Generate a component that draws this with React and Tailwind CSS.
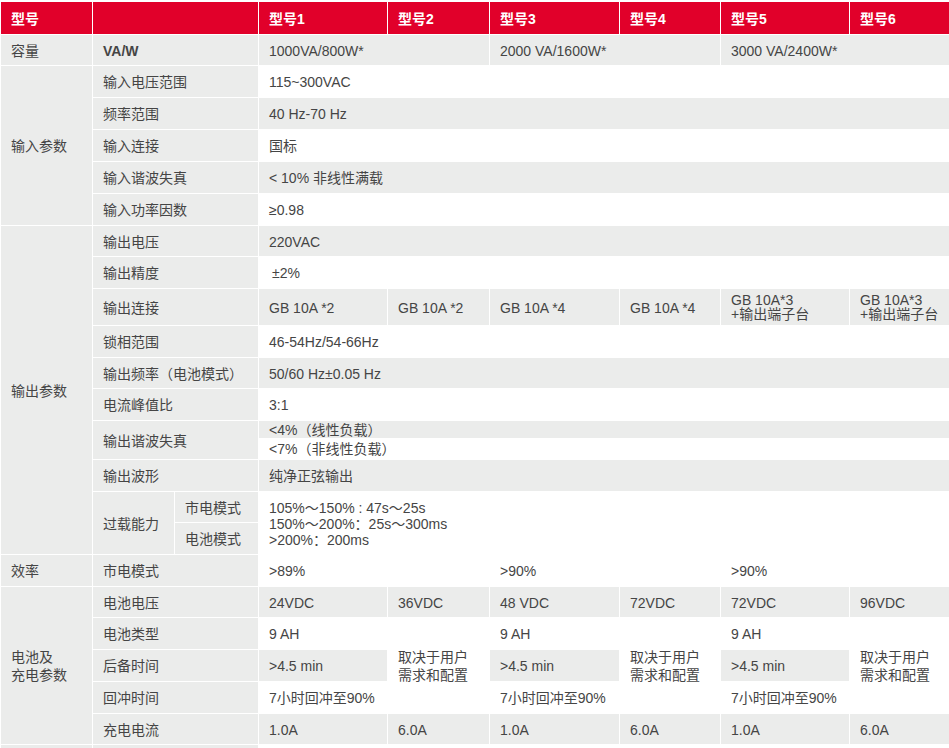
import React from 'react';

const GRAY = 'bg-[#ebeceb]';
const WHITE = 'bg-white';

// basic table cell with white grid lines; pad overrides the vertical padding
const Td = ({ children, className = '', pad = 'pt-[2px] pb-0', ...props }) => (
    <td className={`border border-white px-[10px] ${pad} align-middle ${className}`} {...props}>
        {children}
    </td>
);

const Label = ({ children, className = '', ...props }) => (
    <Td className={`${GRAY} ${className}`} {...props}>{children}</Td>
);

const App = () => {
    return (
        <div className="w-[949px] h-[748px] overflow-hidden bg-white pt-[2px]">
            <table
                className="table-fixed border-collapse w-[949px] text-[14px] leading-[20px] text-[#454545]"
                style={{ fontFamily: '"Liberation Sans", "Noto Sans CJK SC", sans-serif' }}
            >
                <colgroup>
                    <col className="w-[92px]" />
                    <col className="w-[82px]" />
                    <col className="w-[84px]" />
                    <col className="w-[129px]" />
                    <col className="w-[102px]" />
                    <col className="w-[130px]" />
                    <col className="w-[101px]" />
                    <col className="w-[129px]" />
                    <col className="w-[100px]" />
                </colgroup>
                <tbody>
                    {/* header */}
                    <tr className="h-[32px] bg-[#e1002a] text-white font-bold">
                        <Td className="border-t-0">型号</Td>
                        <Td colSpan={2} className="border-t-0"></Td>
                        <Td className="border-t-0">型号1</Td>
                        <Td className="border-t-0">型号2</Td>
                        <Td className="border-t-0">型号3</Td>
                        <Td className="border-t-0">型号4</Td>
                        <Td className="border-t-0">型号5</Td>
                        <Td className="border-t-0">型号6</Td>
                    </tr>

                    {/* capacity */}
                    <tr className="h-[31px]">
                        <Label>容量</Label>
                        <Label colSpan={2} className="font-bold">VA/W</Label>
                        <Td colSpan={2} className={GRAY}>1000VA/800W*</Td>
                        <Td colSpan={2} className={GRAY}>2000 VA/1600W*</Td>
                        <Td colSpan={2} className={GRAY}>3000 VA/2400W*</Td>
                    </tr>

                    {/* input */}
                    <tr className="h-[32px]">
                        <Label rowSpan={5}>输入参数</Label>
                        <Label colSpan={2}>输入电压范围</Label>
                        <Td colSpan={6} className={WHITE}>115~300VAC</Td>
                    </tr>
                    <tr className="h-[32px]">
                        <Label colSpan={2}>频率范围</Label>
                        <Td colSpan={6} className={GRAY}>40 Hz-70 Hz</Td>
                    </tr>
                    <tr className="h-[32px]">
                        <Label colSpan={2}>输入连接</Label>
                        <Td colSpan={6} className={WHITE}>国标</Td>
                    </tr>
                    <tr className="h-[32px]">
                        <Label colSpan={2}>输入谐波失真</Label>
                        <Td colSpan={6} className={GRAY}>&lt; 10% 非线性满载</Td>
                    </tr>
                    <tr className="h-[32px]">
                        <Label colSpan={2}>输入功率因数</Label>
                        <Td colSpan={6} className={WHITE}>≥0.98</Td>
                    </tr>

                    {/* output */}
                    <tr className="h-[31px]">
                        <Label rowSpan={11}>输出参数</Label>
                        <Label colSpan={2}>输出电压</Label>
                        <Td colSpan={6} className={GRAY}>220VAC</Td>
                    </tr>
                    <tr className="h-[32px]">
                        <Label colSpan={2}>输出精度</Label>
                        <Td colSpan={6} className={`${WHITE} pl-[13px]`}>±2%</Td>
                    </tr>
                    <tr className="h-[37px]">
                        <Label colSpan={2}>输出连接</Label>
                        <Td className={GRAY}>GB 10A *2</Td>
                        <Td className={GRAY}>GB 10A *2</Td>
                        <Td className={GRAY}>GB 10A *4</Td>
                        <Td className={GRAY}>GB 10A *4</Td>
                        <Td pad="py-[1px]" className={`${GRAY} leading-[14px]`}>GB 10A*3<br />+输出端子台</Td>
                        <Td pad="py-[1px]" className={`${GRAY} leading-[14px]`}>GB 10A*3<br />+输出端子台</Td>
                    </tr>
                    <tr className="h-[32px]">
                        <Label colSpan={2}>锁相范围</Label>
                        <Td colSpan={6} className={WHITE}>46-54Hz/54-66Hz</Td>
                    </tr>
                    <tr className="h-[31px]">
                        <Label colSpan={2}>输出频率（电池模式）</Label>
                        <Td colSpan={6} className={GRAY}>50/60 Hz±0.05 Hz</Td>
                    </tr>
                    <tr className="h-[32px]">
                        <Label colSpan={2}>电流峰值比</Label>
                        <Td colSpan={6} className={WHITE}>3:1</Td>
                    </tr>
                    <tr className="h-[18px]">
                        <Label colSpan={2} rowSpan={2}>输出谐波失真</Label>
                        <Td colSpan={6} pad="pt-[1px] pb-0" className={`${GRAY} leading-[16px]`}>&lt;4%（线性负载）</Td>
                    </tr>
                    <tr className="h-[21px]">
                        <Td colSpan={6} pad="py-[1px]" className={`${WHITE} leading-[16px]`}>&lt;7%（非线性负载）</Td>
                    </tr>
                    <tr className="h-[32px]">
                        <Label colSpan={2}>输出波形</Label>
                        <Td colSpan={6} className={GRAY}>纯净正弦输出</Td>
                    </tr>
                    <tr className="h-[31px]">
                        <Label rowSpan={2}>过载能力</Label>
                        <Label>市电模式</Label>
                        <Td colSpan={6} rowSpan={2} className={`${WHITE} leading-[16px]`}>
                            105%～150% : 47s～25s<br />
                            150%～200%：25s～300ms<br />
                            &gt;200%：200ms
                        </Td>
                    </tr>
                    <tr className="h-[32px]">
                        <Label>电池模式</Label>
                    </tr>

                    {/* efficiency */}
                    <tr className="h-[32px]">
                        <Label>效率</Label>
                        <Label colSpan={2}>市电模式</Label>
                        <Td colSpan={2} className={WHITE}>&gt;89%</Td>
                        <Td colSpan={2} className={WHITE}>&gt;90%</Td>
                        <Td colSpan={2} className={WHITE}>&gt;90%</Td>
                    </tr>

                    {/* battery */}
                    <tr className="h-[31px]">
                        <Label rowSpan={5} className="leading-[18px]">电池及<br />充电参数</Label>
                        <Label colSpan={2}>电池电压</Label>
                        <Td className={GRAY}>24VDC</Td>
                        <Td className={GRAY}>36VDC</Td>
                        <Td className={GRAY}>48 VDC</Td>
                        <Td className={GRAY}>72VDC</Td>
                        <Td className={GRAY}>72VDC</Td>
                        <Td className={GRAY}>96VDC</Td>
                    </tr>
                    <tr className="h-[32px]">
                        <Label colSpan={2}>电池类型</Label>
                        <Td className={WHITE}>9 AH</Td>
                        <Td rowSpan={3} className={`${WHITE} leading-[18px]`}>取决于用户<br />需求和配置</Td>
                        <Td className={WHITE}>9 AH</Td>
                        <Td rowSpan={3} className={`${WHITE} leading-[18px]`}>取决于用户<br />需求和配置</Td>
                        <Td className={WHITE}>9 AH</Td>
                        <Td rowSpan={3} className={`${WHITE} leading-[18px]`}>取决于用户<br />需求和配置</Td>
                    </tr>
                    <tr className="h-[32px]">
                        <Label colSpan={2}>后备时间</Label>
                        <Td className={GRAY}>&gt;4.5 min</Td>
                        <Td className={GRAY}>&gt;4.5 min</Td>
                        <Td className={GRAY}>&gt;4.5 min</Td>
                    </tr>
                    <tr className="h-[32px]">
                        <Label colSpan={2}>回冲时间</Label>
                        <Td className={WHITE}>7小时回冲至90%</Td>
                        <Td className={WHITE}>7小时回冲至90%</Td>
                        <Td className={WHITE}>7小时回冲至90%</Td>
                    </tr>
                    <tr className="h-[31px]">
                        <Label colSpan={2}>充电电流</Label>
                        <Td className={GRAY}>1.0A</Td>
                        <Td className={GRAY}>6.0A</Td>
                        <Td className={GRAY}>1.0A</Td>
                        <Td className={GRAY}>6.0A</Td>
                        <Td className={GRAY}>1.0A</Td>
                        <Td className={GRAY}>6.0A</Td>
                    </tr>

                    {/* next row, cut off by the window */}
                    <tr className="h-[32px]">
                        <Label></Label>
                        <Label colSpan={2}></Label>
                        <Td colSpan={6} className={WHITE}></Td>
                    </tr>
                </tbody>
            </table>
        </div>
    );
};

export default App;
